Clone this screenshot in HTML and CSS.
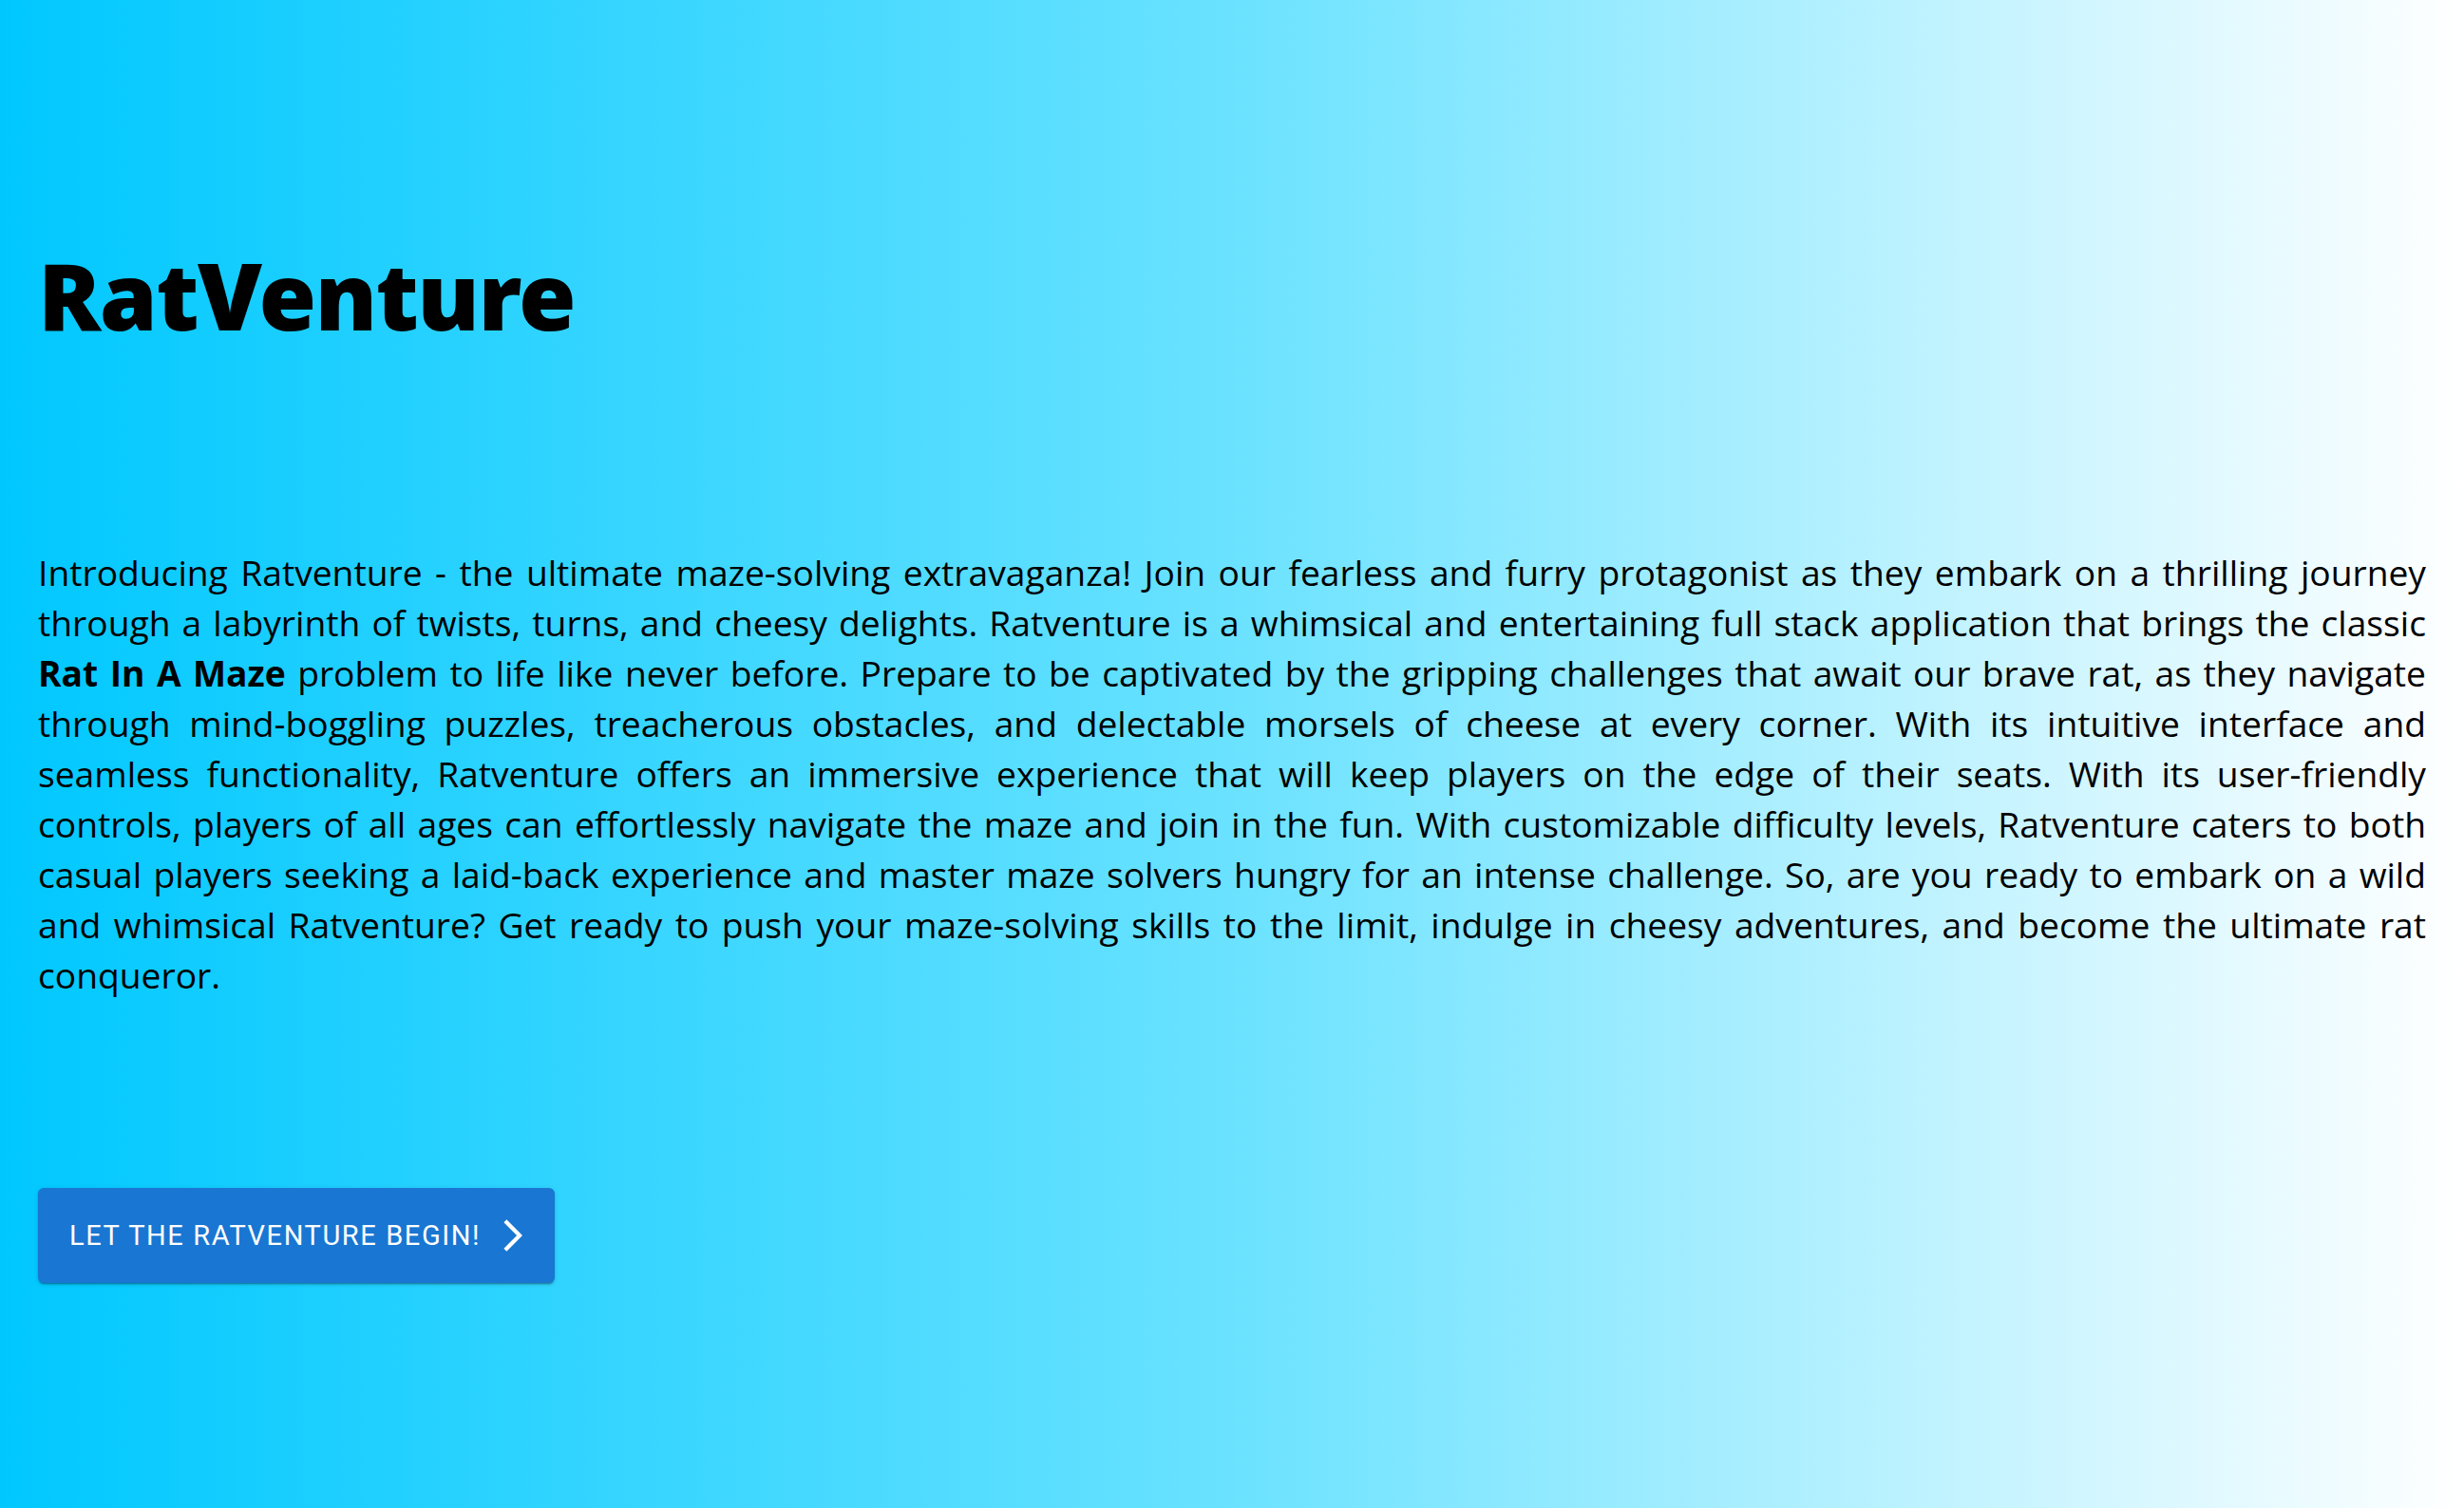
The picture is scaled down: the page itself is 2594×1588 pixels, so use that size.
FILE: index.html
```html
<!DOCTYPE html>
<html lang="en">
<head>
<meta charset="utf-8">
<title>RatVenture</title>
<link rel="stylesheet" href="styles.css">
</head>
<body>
<main class="page">
  <h1 class="title">RatVenture</h1>
  <p class="intro">Introducing Ratventure - the ultimate maze-solving extravaganza! Join our fearless and furry protagonist as they embark on a thrilling journey<br>
through a labyrinth of twists, turns, and cheesy delights. Ratventure is a whimsical and entertaining full stack application that brings the classic<br>
<strong>Rat In A Maze</strong> problem to life like never before. Prepare to be captivated by the gripping challenges that await our brave rat, as they navigate<br>
through mind-boggling puzzles, treacherous obstacles, and delectable morsels of cheese at every corner. With its intuitive interface and<br>
seamless functionality, Ratventure offers an immersive experience that will keep players on the edge of their seats. With its user-friendly<br>
controls, players of all ages can effortlessly navigate the maze and join in the fun. With customizable difficulty levels, Ratventure caters to both<br>
casual players seeking a laid-back experience and master maze solvers hungry for an intense challenge. So, are you ready to embark on a wild<br>
and whimsical Ratventure? Get ready to push your maze-solving skills to the limit, indulge in cheesy adventures, and become the ultimate rat<br>
conqueror.</p>
  <button class="start-btn" type="button">
    <span class="start-label">LET THE RATVENTURE BEGIN!</span>
    <svg class="start-icon" viewBox="0 0 24 24" aria-hidden="true"><path d="M6.23 20.23 8 22l10-10L8 2 6.23 3.77 14.46 12z"/></svg>
  </button>
</main>
</body>
</html>
```
FILE: styles.css
```css
html, body {
  margin: 0;
  padding: 0;
  height: 100%;
}
body {
  background: linear-gradient(to right, #00c8ff 0%, #6ae2ff 50%, #ffffff 100%);
  font-family: "Open Sans", "Noto Sans", sans-serif;
  color: #000;
}
.page {
  box-sizing: border-box;
  min-height: 100vh;
  padding: 0 40px;
  display: flex;
  flex-direction: column;
  align-items: flex-start;
}
.title {
  margin: 240px 0 0 0;
  font-family: "Noto Sans", "Open Sans", sans-serif;
  font-weight: 900;
  font-size: 98px;
  line-height: 140px;
  letter-spacing: -1.5px;
}
.intro {
  align-self: stretch;
  margin: 196px 0 0 0;
  font-size: 37.2px;
  line-height: 53px;
  text-align: justify;
  text-align-last: justify;
}
.intro strong {
  font-weight: 700;
}
.start-btn {
  margin-top: 198px;
  box-sizing: border-box;
  width: 544px;
  height: 100px;
  padding: 0 24px 0 33px;
  display: flex;
  align-items: center;
  justify-content: space-between;
  background: #1976d2;
  color: #fff;
  border: none;
  border-radius: 6px;
  box-shadow: 0 3px 1px -2px rgba(0,0,0,0.2), 0 2px 2px 0 rgba(0,0,0,0.14), 0 1px 5px 0 rgba(0,0,0,0.12);
  font-family: Roboto, "Liberation Sans", sans-serif;
  font-weight: 400;
  font-size: 29px;
  letter-spacing: 1.6px;
  cursor: pointer;
}
.start-icon {
  width: 40px;
  height: 40px;
  fill: #fff;
}
```
